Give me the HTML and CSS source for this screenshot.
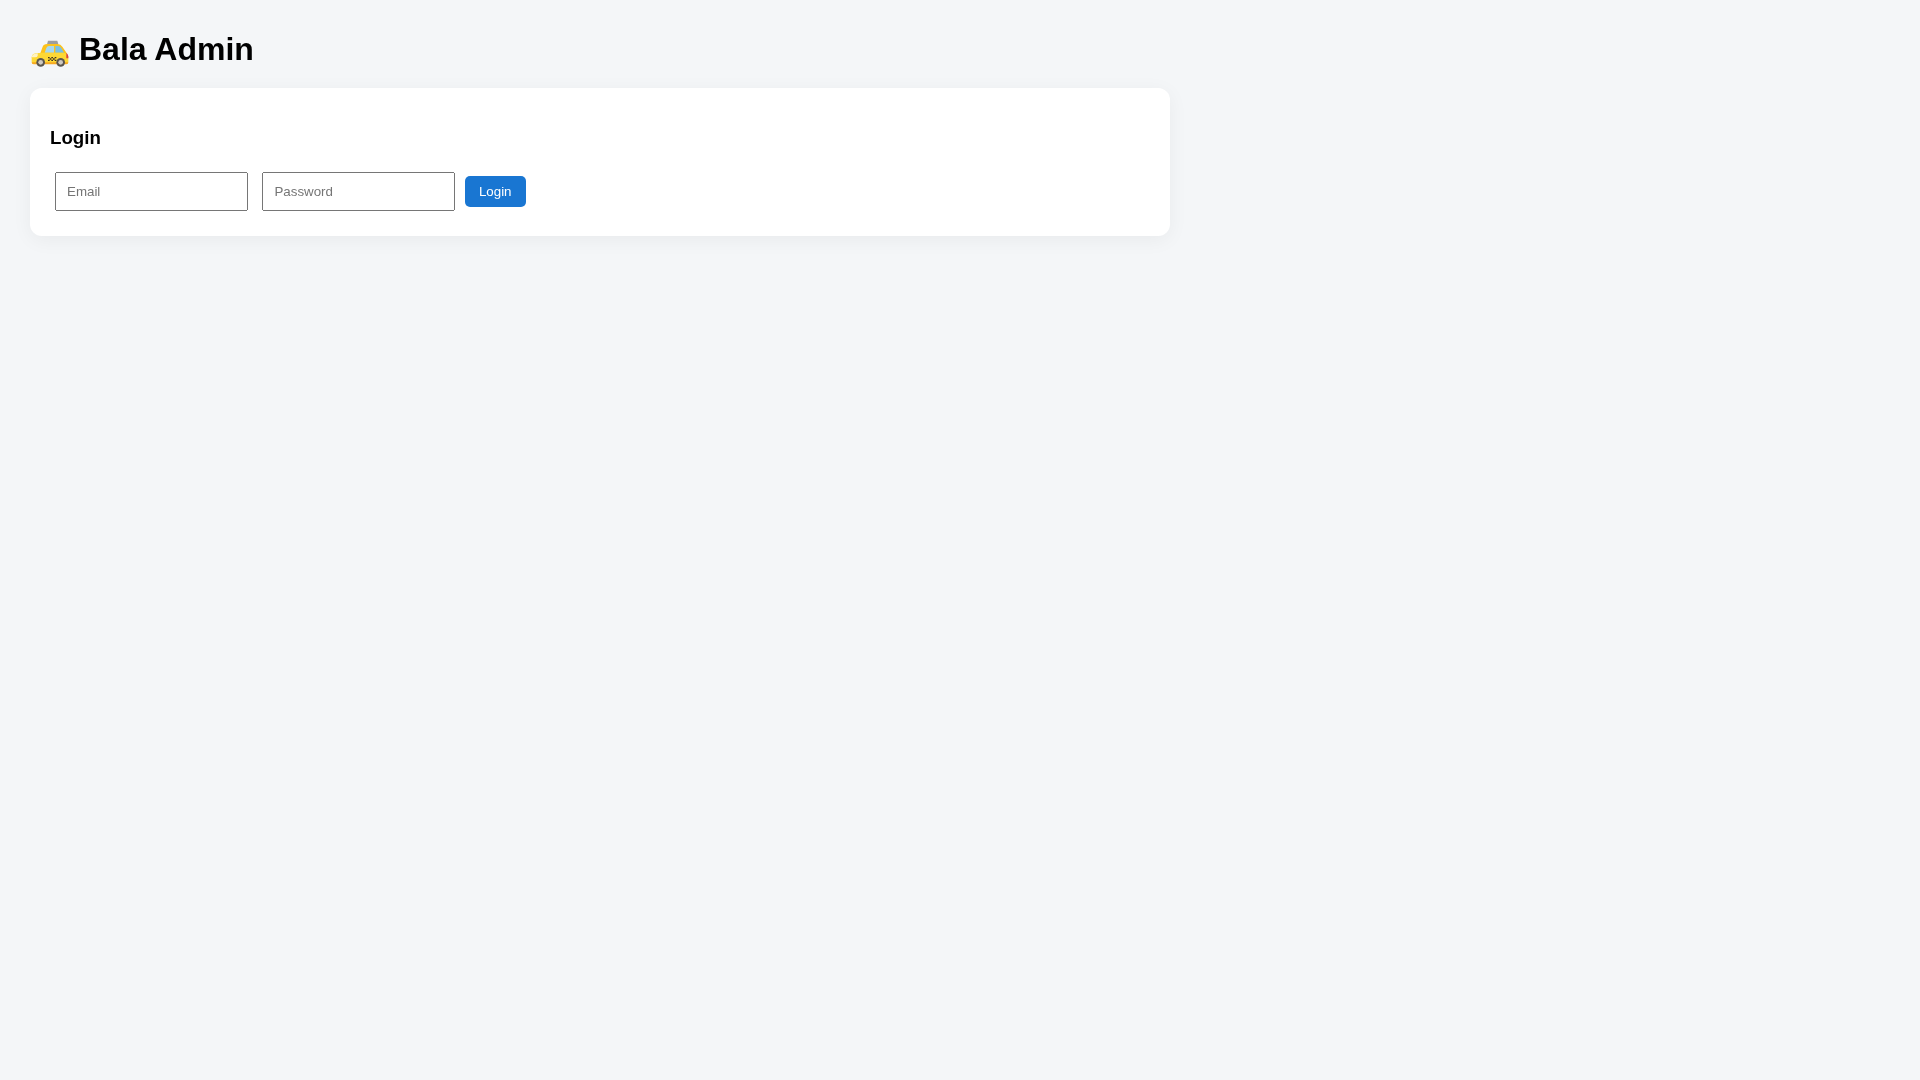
FILE: index.html
```html
<!DOCTYPE html>
<html lang="en">
<head>
    <meta charset="UTF-8">
    <meta name="viewport" content="width=device-width, initial-scale=1.0">
    <title>Bala Admin</title>
    <link rel="stylesheet" href="styles.css">
</head>
<body>
    <h1>
        <svg class="taxi" viewBox="6 32 120 84" aria-hidden="true">
            <path d="M60 34h28l3 11H57z" fill="#9e9e9e"/>
            <path d="M36 74l8-22q3-8 13-8h32q9 0 14 8l15 22z" fill="#fcc21b"/>
            <path d="M50 70l5-14q2-6 8-6h15v20z" fill="#a6d8ee"/>
            <path d="M82 50h8q7 0 10 6l8 14H82z" fill="#7cc0e2"/>
            <path d="M11 84q1-10 12-12l20-2h62q14 1 16 12v16q0 6-6 6H17q-6 0-6-6z" fill="#fdd835"/>
            <path d="M11 84q1-9 10-11l8-1v7q-1 5-8 5z" fill="#fff3c4"/>
            <path d="M115 71q6 3 6 11v5h-6z" fill="#d84343"/>
            <path d="M11 99h110q0 6-6 6H17q-6 0-6-6z" fill="#f6a821"/>
            <path d="M60 83h5v4h-5zM70 83h5v4h-5zM80 83h5v4h-5zM65 87h5v4h-5zM75 87h5v4h-5zM60 91h5v4h-5zM70 91h5v4h-5zM80 91h5v4h-5z" fill="#3e3420"/>
            <circle cx="38" cy="99" r="13" fill="#5a5650"/>
            <circle cx="38" cy="99" r="7" fill="#cfcac2"/>
            <circle cx="98" cy="99" r="13" fill="#5a5650"/>
            <circle cx="98" cy="99" r="7" fill="#cfcac2"/>
        </svg>
        Bala Admin
    </h1>

    <div class="card">
        <h3>Login</h3>
        <form>
            <input type="text" placeholder="Email">
            <input type="password" placeholder="Password">
            <button type="button">Login</button>
        </form>
    </div>
</body>
</html>
```

FILE: styles.css
```css
body {
    margin: 0;
    padding: 30px;
    background-color: #f4f6f8;
    font-family: "Liberation Sans", Arial, sans-serif;
}

h1 {
    display: flex;
    gap: 9px;
    margin: 0 0 19px;
    font-size: 32px;
    line-height: 39px;
    color: #000;
    will-change: transform;
}

.taxi {
    width: 40px;
    height: 28px;
    margin-top: 10px;
}

.card {
    box-sizing: border-box;
    width: 1140px;
    padding: 20px;
    background-color: #fff;
    border-radius: 12px;
    box-shadow: 0 4px 20px rgba(0, 0, 0, 0.05);
    will-change: transform;
}

h3 {
    margin: 18.72px 0;
    font-size: 18.72px;
    color: #000;
}

input {
    box-sizing: border-box;
    width: 193px;
    margin: 5px;
    padding: 10px;
}

button {
    padding: 8px 14px;
    background-color: #1976d2;
    color: #fff;
    border: none;
    border-radius: 5px;
}
```
